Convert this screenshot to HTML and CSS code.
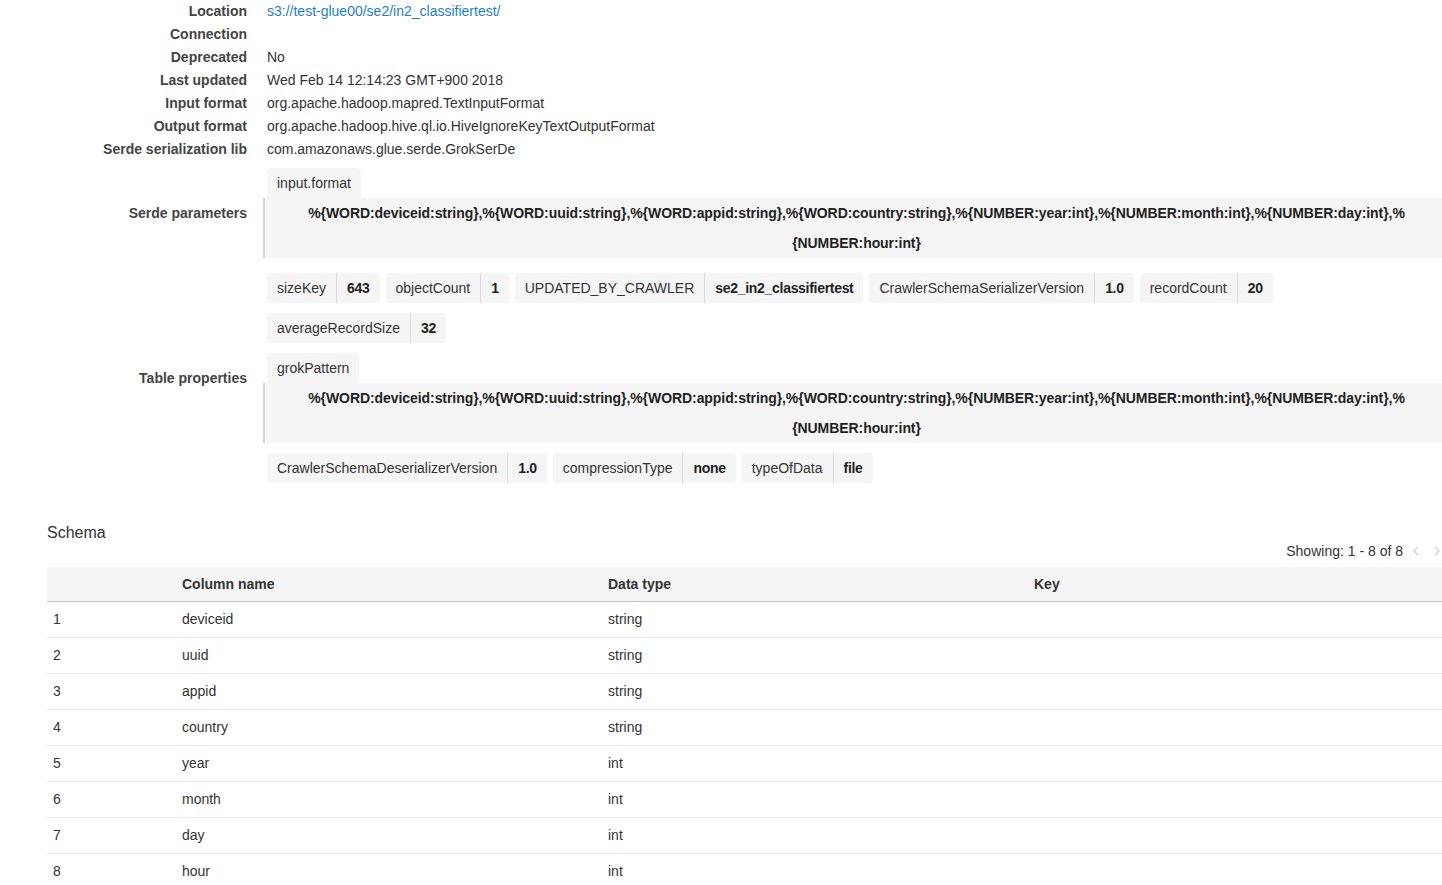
FILE: index.html
```html
<!DOCTYPE html>
<html lang="en">
<head>
    <meta charset="UTF-8">
    <title>Table details</title>
    <link rel="stylesheet" href="styles.css">
</head>
<body>
    <!-- Table details -->
    <div class="details">
        <div class="row"><div class="label">Location</div><div class="value"><a class="link" href="#">s3://test-glue00/se2/in2_classifiertest/</a></div></div>
        <div class="row"><div class="label">Connection</div><div class="value"></div></div>
        <div class="row"><div class="label">Deprecated</div><div class="value">No</div></div>
        <div class="row"><div class="label">Last updated</div><div class="value">Wed Feb 14 12:14:23 GMT+900 2018</div></div>
        <div class="row"><div class="label">Input format</div><div class="value">org.apache.hadoop.mapred.TextInputFormat</div></div>
        <div class="row"><div class="label">Output format</div><div class="value">org.apache.hadoop.hive.ql.io.HiveIgnoreKeyTextOutputFormat</div></div>
        <div class="row"><div class="label">Serde serialization lib</div><div class="value">com.amazonaws.glue.serde.GrokSerDe</div></div>

        <div class="row row-block serde">
            <div class="label">Serde parameters</div>
            <div class="value">
                <div class="param">
                    <div class="param-key">input.format</div>
                    <div class="param-val">%{WORD:deviceid:string},%{WORD:uuid:string},%{WORD:appid:string},%{WORD:country:string},%{NUMBER:year:int},%{NUMBER:month:int},%{NUMBER:day:int},%<br>{NUMBER:hour:int}</div>
                </div>
            </div>
        </div>

        <div class="row row-block props">
            <div class="label">Table properties</div>
            <div class="value tags">
                <div class="tag"><span class="tag-key">sizeKey</span><span class="tag-val">643</span></div>
                <div class="tag"><span class="tag-key">objectCount</span><span class="tag-val">1</span></div>
                <div class="tag"><span class="tag-key">UPDATED_BY_CRAWLER</span><span class="tag-val">se2_in2_classifiertest</span></div>
                <div class="tag"><span class="tag-key">CrawlerSchemaSerializerVersion</span><span class="tag-val">1.0</span></div>
                <div class="tag"><span class="tag-key">recordCount</span><span class="tag-val">20</span></div>
                <div class="tag"><span class="tag-key">averageRecordSize</span><span class="tag-val">32</span></div>
                <div class="param">
                    <div class="param-key">grokPattern</div>
                    <div class="param-val">%{WORD:deviceid:string},%{WORD:uuid:string},%{WORD:appid:string},%{WORD:country:string},%{NUMBER:year:int},%{NUMBER:month:int},%{NUMBER:day:int},%<br>{NUMBER:hour:int}</div>
                </div>
                <div class="tag"><span class="tag-key">CrawlerSchemaDeserializerVersion</span><span class="tag-val">1.0</span></div>
                <div class="tag"><span class="tag-key">compressionType</span><span class="tag-val">none</span></div>
                <div class="tag"><span class="tag-key">typeOfData</span><span class="tag-val">file</span></div>
            </div>
        </div>
    </div>

    <!-- Schema -->
    <section class="schema">
        <h2 class="schema-title">Schema</h2>
        <div class="pager">
            <span>Showing: 1 - 8 of 8</span>
            <svg class="chev chev-prev" width="6" height="10" viewBox="0 0 6 10"><polyline points="5,1 1,5 5,9" fill="none" stroke="#cfcfcf" stroke-width="1.2"/></svg>
            <svg class="chev chev-next" width="6" height="10" viewBox="0 0 6 10"><polyline points="1,1 5,5 1,9" fill="none" stroke="#cfcfcf" stroke-width="1.2"/></svg>
        </div>
        <table class="schema-table">
            <thead>
                <tr><th class="col-num"></th><th class="col-name">Column name</th><th class="col-type">Data type</th><th>Key</th></tr>
            </thead>
            <tbody>
                <tr><td>1</td><td>deviceid</td><td>string</td><td></td></tr>
                <tr><td>2</td><td>uuid</td><td>string</td><td></td></tr>
                <tr><td>3</td><td>appid</td><td>string</td><td></td></tr>
                <tr><td>4</td><td>country</td><td>string</td><td></td></tr>
                <tr><td>5</td><td>year</td><td>int</td><td></td></tr>
                <tr><td>6</td><td>month</td><td>int</td><td></td></tr>
                <tr><td>7</td><td>day</td><td>int</td><td></td></tr>
                <tr><td>8</td><td>hour</td><td>int</td><td></td></tr>
            </tbody>
        </table>
    </section>
</body>
</html>
```

FILE: styles.css
```css
/* Base */
* {
    margin: 0;
    padding: 0;
    box-sizing: border-box;
}

body {
    font-family: "Liberation Sans", Arial, Helvetica, sans-serif;
    font-size: 14px;
    color: #333;
    background: white;
    width: 1442px;
    overflow: hidden;
}

/* Detail rows */
.row {
    display: flex;
    line-height: 23px;
}

.label {
    width: 247px;
    flex-shrink: 0;
    text-align: right;
    font-weight: bold;
    color: #444;
}

.value {
    flex: 1;
    margin-left: 20px;
    min-height: 23px;
}

.link {
    color: #1f7fc5;
    text-decoration: none;
}

.row-block {
    align-items: center;
}

.serde {
    margin-top: 7px;
}

.props {
    margin-top: 15px;
}

/* Key / value parameter with long value */
.param {
    width: 100%;
}

.param-key {
    display: inline-block;
    height: 30px;
    line-height: 30px;
    padding: 0 10px;
    background: #f5f5f5;
    border-radius: 4px 4px 0 0;
}

.param-val {
    margin-left: -4px;
    padding: 0 20px 0 26px;
    background: #f5f5f5;
    border-left: 2px solid #d6d6d6;
    text-align: center;
    font-weight: bold;
    line-height: 30px;
    letter-spacing: -0.07px;
    color: #222;
}

/* Tags */
.tags {
    display: flex;
    flex-wrap: wrap;
    gap: 10px 6px;
}

.tag {
    display: flex;
    height: 30px;
    line-height: 30px;
    background: #f5f5f5;
    border-radius: 4px;
}

.tag-key {
    padding: 0 10px;
}

.tag-val {
    padding: 0 10px;
    border-left: 1px solid #dcdcdc;
    font-weight: bold;
    letter-spacing: -0.3px;
    color: #222;
}

/* Schema */
.schema {
    margin-top: 40px;
    padding-left: 47px;
}

.schema-title {
    font-size: 16px;
    font-weight: normal;
    line-height: 19px;
    color: #333;
}

.pager {
    display: flex;
    justify-content: flex-end;
    align-items: center;
    line-height: 20px;
    margin-top: -1px;
    padding-right: 2px;
}

.chev-prev {
    margin-left: 10px;
}

.chev-next {
    margin-left: 15px;
}

.schema-table {
    width: 1395px;
    margin-top: 6px;
    border-collapse: collapse;
    table-layout: fixed;
}

.schema-table th {
    height: 34px;
    padding: 0 6px;
    text-align: left;
    font-weight: bold;
    background: #f5f5f5;
    border-bottom: 1px solid #c4c4c4;
}

.schema-table td {
    height: 36px;
    padding: 0 6px;
    border-bottom: 1px solid #e6e6e6;
}

.col-num {
    width: 129px;
}

.col-name,
.col-type {
    width: 426px;
}
```
